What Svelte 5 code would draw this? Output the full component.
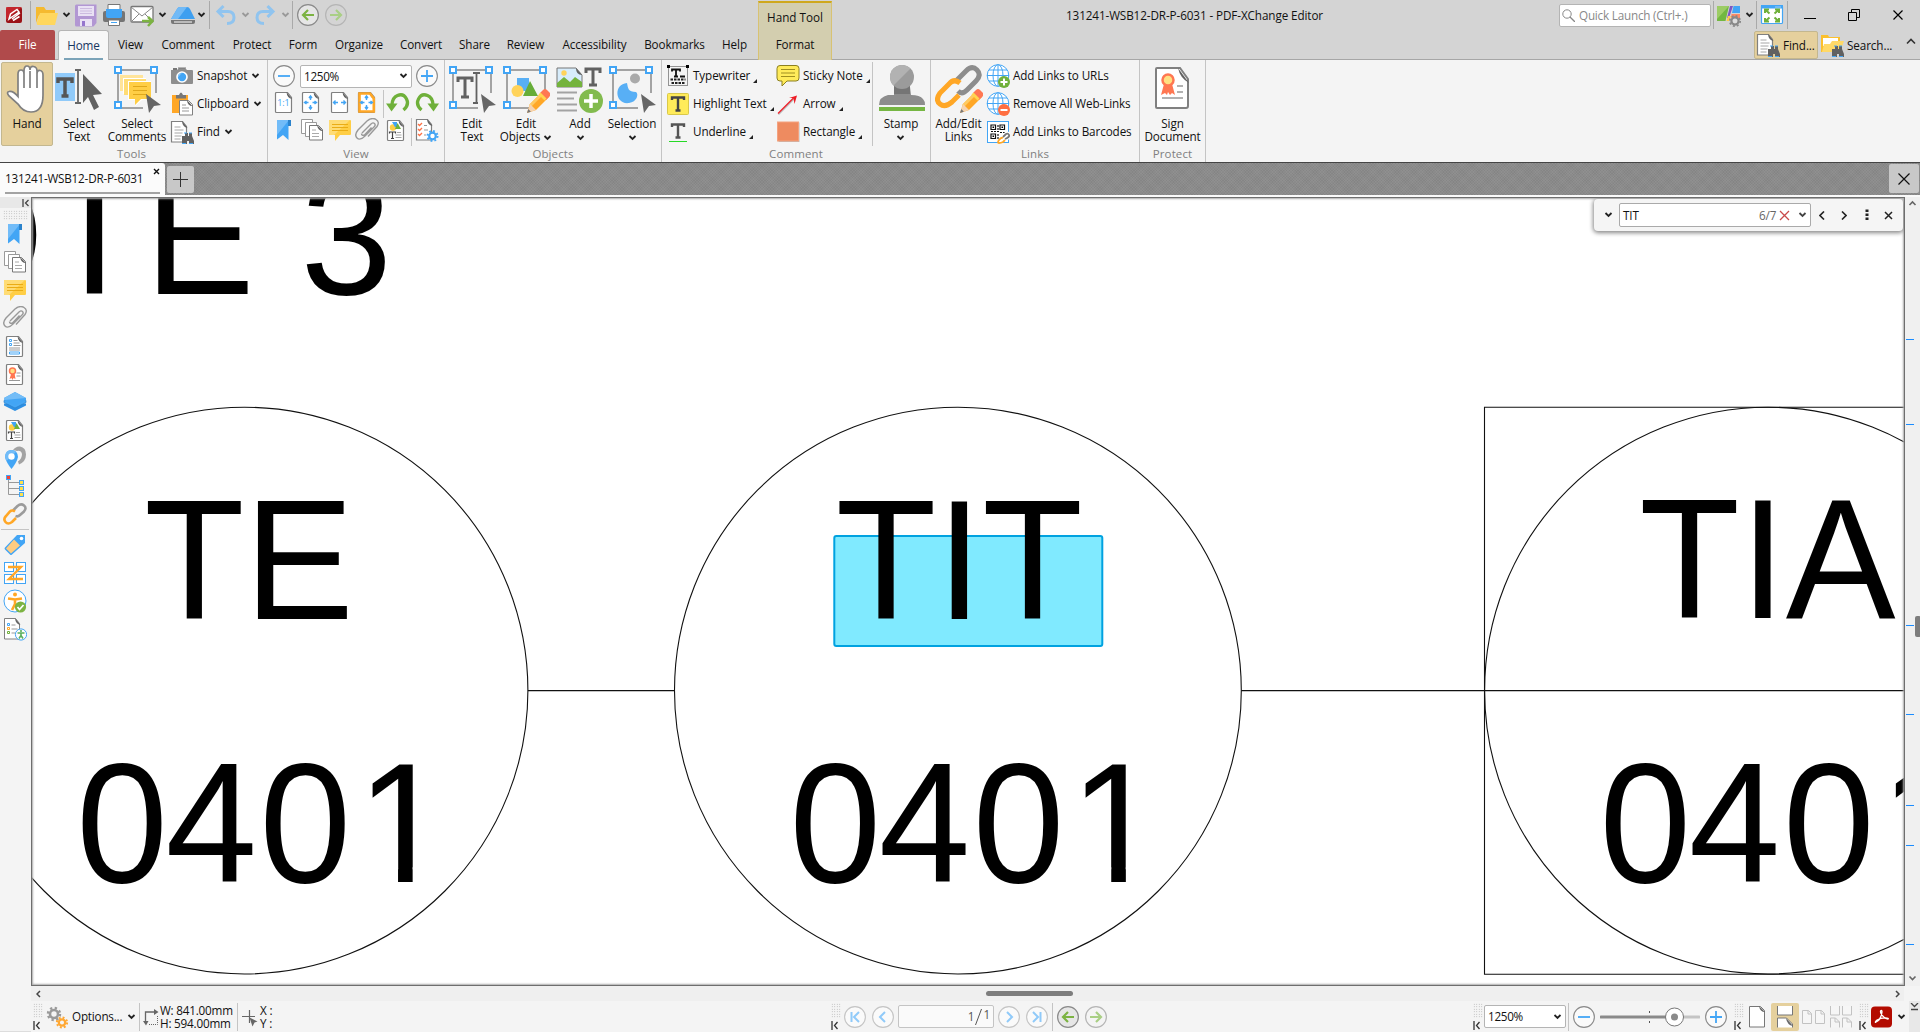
<script>
  const menu = ['View', 'Comment', 'Protect', 'Form', 'Organize', 'Convert', 'Share', 'Review', 'Accessibility', 'Bookmarks', 'Help'];
  const quick = ['logo', '|', 'folder', 'v', 'save', 'print', 'mail', 'v', 'scan', 'v', '|', 'undo', 'vd', 'redo', 'vd', '|', 'back', 'fwd'];
  const side = ['bookmark', 'pages', 'comment', 'clip', 'fields', 'sign', 'layers', 'content', 'dest', 'tree', 'link', '|', 'tag', 'order', 'access', 'report'];
  const hits = [339, 424, 625, 714, 805, 845, 944];
</script>

{#snippet chev(color = '#222')}
  <svg class="chev" width="9" height="6" viewBox="0 0 9 6"><path d="M1.500 1l3 3 3-3" fill="none" stroke={color} stroke-width="1.800" /></svg>
{/snippet}

{#snippet cursor()}
  <path d="M33 29l15 11-7 1-5 7z" fill="#666" />
{/snippet}

{#snippet frame()}
  <path d="M5 5h38v23M5 5v38h25" fill="none" stroke="#a3a3a3" stroke-width="2" />
  <g fill="#fff" stroke="#42a5f5" stroke-width="2"><rect x="2" y="2" width="6" height="6" /><rect x="38" y="2" width="6" height="6" /><rect x="2" y="37" width="6" height="6" /></g>
{/snippet}

{#snippet pencil()}
  <path d="M25 48l3-9 13-13 6 6-13 13z" fill="#ffa726" /><path d="M27 40l13-13 2 2-13 13z" fill="#ffca60" />
  <path d="M25 48l3-9 6 6z" fill="#f5d3b0" /><path d="M25 48l1.300-4 2.600 2.700z" fill="#777" />
  <path d="M38 28l3-3q2-2 4 0l3 3q1 2-1 4l-3 3z" fill="#ff7752" /><path d="M36.500 29.500l2-2 6 6-2 2z" fill="#ffd54f" />
{/snippet}

{#snippet binoc()}
  <path d="M12 16h3v-3h3v3h1v-3h3v3l2 5v3h-5v-3h-2v3h-5v-3z" fill="#616161" /><path d="M14 13h3M19 13h3M12 23.500h4M19 23.500h4" stroke="#42a5f5" />
{/snippet}

{#snippet page()}
  <path d="M4.500 2.500h11l4 5v14q0 1-1 1H4.500q-1 0-1-1v-18q0-1 1-1z" fill="#fff" stroke="#808080" stroke-width="1.200" /><path d="M14.500 2l5.500 7q-5-1-5.500-7z" fill="#616161" />
{/snippet}

{#snippet ring(color = '#8a8a8a')}
  <circle cx="12" cy="12" r="10.400" fill="#fafafa" stroke={color} stroke-width="1.100" />
{/snippet}

{#snippet gear()}
  <circle cx="9" cy="9" r="4" fill="none" stroke="#9a9a9a" stroke-width="2.600" /><circle cx="9" cy="9" r="6" fill="none" stroke="#9a9a9a" stroke-width="2.500" stroke-dasharray="2.3 2.410" />
{/snippet}

{#snippet globe()}
  <g fill="#fff" stroke="#42a5f5"><circle cx="12" cy="11.500" r="10.800" /><ellipse cx="12" cy="11.500" rx="5" ry="10.800" /><path d="M12 1v21M1 11.500h22M3 6h18M3 17h18" fill="none" /></g>
{/snippet}

{#snippet icon(n)}
  <svg width="24" height="24" viewBox="0 0 24 24">
    {#if n === 'logo'}
      <rect x="4" y="4" width="16" height="16" rx="2" fill="#9b1217" /><path d="M4 4h16L4 17z" fill="#d8323a" opacity=".65" />
      <path d="M7 16l1.500-5L15 6.500l2 2.500-6.500 4.500zM10 16l8-6M11 17.500l6.500-4" fill="none" stroke="#fff" stroke-width="1.500" />
    {:else if n === 'folder'}
      <path d="M1 4h8l2 3h9v5H4L1 20z" fill="#f5ba30" /><path d="M5 10h18l-3 12H3q-2 0-1-3z" fill="#ffd75e" />
    {:else if n === 'save'}
      <path d="M1 3q0-1.500 1.500-1.500h20V20l-3 3.500h-17Q1 23.500 1 22z" fill="#b297d3" /><path d="M4 3h16v10H4zM6 16h12v7H6z" fill="#e9e1f4" /><path d="M6 5.500h12M6 8h12M6 10.500h12" stroke="#ccbbe0" /><rect x="8" y="18" width="3" height="5" fill="#9575cd" />
    {:else if n === 'print'}
      <path d="M6 1.500h12V8H6z" fill="#fff" stroke="#777" /><rect x="1" y="8" width="22" height="11" rx="2" fill="#757575" /><path d="M4 6h16v7q0 2-2 2H6q-2 0-2-2z" fill="#42a5f5" /><path d="M6.500 17h11v5.500h-11z" fill="#fff" stroke="#777" /><path d="M9 19.500h6" stroke="#42a5f5" />
    {:else if n === 'mail'}
      <rect x="1" y="3.500" width="22" height="15.500" rx="1" fill="#fff" stroke="#777" stroke-width="1.300" /><path d="M1 4l11 9 11-9M1 19l8-8M23 19l-8-8" fill="none" stroke="#888" /><path d="M12 18h10M18 14l4.500 4-4.500 5" fill="none" stroke="#7cb342" stroke-width="2.500" />
    {:else if n === 'scan'}
      <path d="M6 6q.8-2 3-2h7q2 0 3 2l5 10H0z" fill="#3e9ff0" /><path d="M6 6q.8-2 3-2h7L7 16H0z" fill="#72baf6" /><path d="M0 17h24v2q0 2-2 2H2q-2 0-2-2z" fill="#777" /><path d="M3 19h18" stroke="#fff" />
    {:else if n === 'undo' || n === 'redo'}
      <g transform={n === 'redo' ? 'matrix(-1 0 0 1 24 0)' : undefined}><path d="M9.500 3L4 8.500 9.500 14M4 8.500h10q6 0 6 6t-7 6" fill="none" stroke="#90c4ef" stroke-width="3" /></g>
    {:else if n === 'back'}
      <circle cx="12" cy="12" r="10.400" fill="#e6e6e6" stroke="#8a8a8a" stroke-width="1.200" /><path d="M18 12H7M12 7l-5 5 5 5" fill="none" stroke="#7cb342" stroke-width="2.200" />
    {:else if n === 'fwd'}
      <circle cx="12" cy="12" r="10.400" fill="none" stroke="#b5b5b5" stroke-width="1.200" /><path d="M6 12h11M12 7l5 5-5 5" fill="none" stroke="#a9cf84" stroke-width="2.200" />
    {:else if n === 'minus'}
      {@render ring()}<path d="M6 12h12" stroke="#42a5f5" stroke-width="1.800" />
    {:else if n === 'plus'}
      {@render ring()}<path d="M6 12h12M12 6v12" stroke="#42a5f5" stroke-width="1.800" />
    {:else if n === 'first'}
      {@render ring('#c4c4c4')}<path d="M8.500 7v10M16 7l-5 5 5 5" fill="none" stroke="#90caf9" stroke-width="2" />
    {:else if n === 'prev'}
      {@render ring('#c4c4c4')}<path d="M14 7l-5 5 5 5" fill="none" stroke="#90caf9" stroke-width="2" />
    {:else if n === 'next'}
      {@render ring('#c4c4c4')}<path d="M10 7l5 5-5 5" fill="none" stroke="#90caf9" stroke-width="2" />
    {:else if n === 'last'}
      {@render ring('#c4c4c4')}<path d="M15.500 7v10M8 7l5 5-5 5" fill="none" stroke="#90caf9" stroke-width="2" />
    {:else if n === 'camera'}
      <path d="M1 6h6l2-2h6l2 2h5q1 0 1 1v12q0 1-1 1H2q-1 0-1-1z" fill="#8e8e8e" /><path d="M3 4h4v2H3zM8 3.500h8v1H8z" fill="#777" /><circle cx="12" cy="13" r="5.800" fill="#fff" /><circle cx="12" cy="13" r="4.200" fill="#42a5f5" /><path d="M12 8.800a4.200 4.200 0 0 0-4 4.500z" fill="#90caf9" />
    {:else if n === 'clipboard'}
      <path d="M2 3h4v3h10V3h2v18H2z" fill="#ffa726" /><path d="M6 3h3q2-5 4 0h3v3.500H6z" fill="#777" /><path d="M9.500 8.500h9l4 4v10.500h-13z" fill="#fff" stroke="#808080" /><path d="M17 8l5.500 6q-5 0-5.500-6z" fill="#616161" /><path d="M12 13h4M12 16h7M12 19h7" stroke="#999" />
    {:else if n === 'find'}
      <path d="M1.500 1.500h11l4 5V22h-15z" fill="#fff" stroke="#808080" stroke-width="1.200" /><path d="M12 1l5.500 7q-5-1-5.500-7z" fill="#616161" /><path d="M4.500 7h6M4.500 10h9M4.500 13h8M4.500 16h7M4.500 19h6" stroke="#a6a6a6" />{@render binoc()}
    {:else if n === 'searchf'}
      <path d="M1 2h7l1 2h11v15H1z" fill="#fbc02d" /><path d="M3 5h15v8H3z" fill="#fff" /><path d="M4 11h6l2-3h12l-4 11H2z" fill="#ffd968" />{@render binoc()}
    {:else if n === 'one'}
      {@render page()}<text x="11.500" y="15.500" font-size="9" text-anchor="middle" fill="#42a5f5">1:1</text>
    {:else if n === 'fit' || n === 'fitv'}
      {@render page()}{#if n === 'fitv'}<path d="M4.500 3.500h10.500l3.800 5v13H4.500z" fill="none" stroke="#ffa726" stroke-width="2.600" />{/if}
      <path d="M11.500 10V6M10 8l1.500-2L13 8M11.500 15v4M10 17l1.500 2 1.500-2M9.500 12.500h-4M7.500 11l-2 1.500 2 1.500M13.500 12.500h4M15.500 11l2 1.500-2 1.500" fill="none" stroke="#42a5f5" stroke-width="1.400" />
    {:else if n === 'fitw'}
      {@render page()}<path d="M10 12.500H5.500M7.500 10.500l-2 2 2 2M13 12.500h4.500M15.500 10.500l2 2-2 2" fill="none" stroke="#42a5f5" stroke-width="1.400" />
    {:else if n === 'rotl' || n === 'rotr'}
      <g transform={n === 'rotr' ? 'matrix(-1 0 0 1 24 0)' : undefined}><path d="M17.500 20q6-5 3-11t-9-3.500q-5 2-5.500 9" fill="none" stroke="#6fb03a" stroke-width="3.300" /><path d="M0 13.500h11.500l-6 8z" fill="#6fb03a" /></g>
    {:else if n === 'bookmark'}
      <path d="M5 2h11.500v20l-5.500-5-6 4.500z" fill="#42a5f5" /><path d="M5 2h12L5 17z" fill="#72bcf8" /><path d="M16 2h3v6h-3z" fill="#2b83cc" />
    {:else if n === 'pages'}
      <g fill="#fff" stroke="#999"><path d="M1.500 1.500h11v14h-11z" /><path d="M5.500 4.500h11v14h-11z" /><path d="M9.500 7.500h9l4 4v10.500h-13z" stroke="#777" /></g><path d="M17 7l6 6q-5 0-6-6z" fill="#616161" /><path d="M12 12h4M12 15.500h7M12 18.500h7" stroke="#aaa" />
    {:else if n === 'comment'}
      <path d="M2 2h20q1 0 1 1v13q0 1-1 1H12l-5 6v-6H2q-1 0-1-1V3q0-1 1-1z" fill="#ffce45" /><path d="M1 3q0-1 1-1h20L6 17H2q-1 0-1-1z" fill="#ffdc75" /><path d="M4 6.500h16M4 9.500h16M4 12.500h16" stroke="#eaac15" stroke-width="1.200" />
    {:else if n === 'clip'}
      <path d="M7 15l9-9q2-2 3.500-.5T19 9l-9 9q-5 5-8 2t1-8l9-9q5-4 9-1.500t1 7l-9 10M6.500 15.500q0 2.500 3 1.500l7-7.500" fill="none" stroke="#999" stroke-width="1.400" />
    {:else if n === 'content'}
      {@render page()}<circle cx="9" cy="9.500" r="3.200" fill="#ffce45" /><path d="M8 4h5v5h-2z" fill="#42a5f5" /><path d="M13.500 5l3.500 6h-6z" fill="#6fb03a" /><path d="M5.500 14h6M8.500 14v6.500M7 20.500h3M5.500 13.500v2M11.500 13.500v2" stroke="#444" stroke-width="1.200" fill="none" /><path d="M13 14.500h4M11.500 17h6M11.500 19.500h6" stroke="#a6a6a6" />
    {:else if n === 'prefs'}
      <path d="M1.500 1.500h11l4 5V22h-15z" fill="#fff" stroke="#808080" stroke-width="1.200" /><path d="M12 1l5.500 7q-5-1-5.500-7z" fill="#616161" /><path d="M3 6l1.500 1.500L7 5M3 11l1.500 1.500L7 10M3 16l1.500 1.500L7 15" fill="none" stroke="#ff7043" stroke-width="1.300" /><path d="M9 7.500h3M9 12h4M9 17h2" stroke="#999" />
      <circle cx="17.500" cy="18" r="3.300" fill="#fff" stroke="#42a5f5" stroke-width="2.200" /><circle cx="17.500" cy="18" r="5" fill="none" stroke="#42a5f5" stroke-width="2" stroke-dasharray="1.8 2.127" />
    {:else if n === 'typewriter'}
      <path d="M2.500 2.500h19v19h-19z" fill="none" stroke="#333" stroke-dasharray="1 1" /><path d="M6 7.500V5.500h8v2M10 5.500v7M8 12.500h4M14 12.500h5" fill="none" stroke="#111" stroke-width="1.800" /><path d="M4.500 15.500h15M5.500 19h13" stroke="#222" stroke-width="2.200" stroke-dasharray="2.500 1" /><path d="M1 1h3v3H1zM20 1h3v3h-3z" />
    {:else if n === 'highlight'}
      <rect x="1.500" y="1.500" width="21" height="21" rx="1" fill="#ffeb5a" stroke="#d9c84a" /><path d="M6 8V5.500h12V8M12 5.500v13M9.500 18.500h5" fill="none" stroke="#444" stroke-width="2.400" />
    {:else if n === 'underline'}
      <path d="M6 7V4.500h12V7M12 4.500v13M9.500 17.500h5" fill="none" stroke="#555" stroke-width="2.400" /><path d="M3 21.500h18" stroke="#26d926" />
    {:else if n === 'sticky'}
      <path d="M4 1.500h16q3 0 3 3V14q0 3-3 3h-9l-5 5v-5H4q-3 0-3-3V4.500q0-3 3-3z" fill="#ffeb5a" stroke="#8c8020" /><path d="M5 5.500h14M5 9h14M5 12.500h14" stroke="#a08f20" />
    {:else if n === 'arrow'}
      <path d="M2.500 22.500L19 6" fill="none" stroke="#bbb" stroke-width="1.500" /><path d="M2 21.500L18 5.500" stroke="#ee1c25" stroke-width="1.300" /><path d="M13 6l8-2.500L18.500 12l-1-6z" fill="#ee1c25" />
    {:else if n === 'rect'}
      <rect x="2.500" y="2.500" width="21" height="19.500" fill="#bbb" /><rect x="1.500" y="2" width="21" height="19" fill="#ee8b60" stroke="#f4a27f" />
    {:else if n === 'urladd'}
      {@render globe()}<circle cx="18" cy="18" r="6" fill="#6fb03a" /><path d="M14.500 18h7M18 14.500v7" stroke="#fff" stroke-width="2" />
    {:else if n === 'urldel'}
      {@render globe()}<circle cx="18" cy="18" r="6" fill="#ff6e40" /><path d="M14.500 18h7" stroke="#fff" stroke-width="2" />
    {:else if n === 'barcode'}
      <rect x="1.500" y="1.500" width="21" height="21" fill="#fff" stroke="#42a5f5" /><g fill="none" stroke="#111" stroke-width="1.200"><path d="M5 5h4.500v4.500H5zM14 5h4.500v4.500H14zM5 14h4.500v4.500H5z" /><path d="M5 11.500h8M12 5v7M14 12.500h5M12 14v5" stroke-dasharray="2 1" /></g><path d="M6.500 6.500H8V8H6.500zM15.500 6.500H17V8h-1.500zM6.500 15.500H8V17H6.500z" /><path d="M18 16l2-2q2-1 3 1t-2 3l-2 1" stroke="#fff" stroke-width="4" fill="none" /><path d="M17 17l3-3q2-1 3 1t-4 4" stroke="#777" stroke-width="1.800" fill="none" /><path d="M17 18q-2-1-4 2t0 3 4-1l2-2" stroke="#ffa726" stroke-width="1.800" fill="none" />
    {:else if n === 'fields'}
      {@render page()}<path d="M6.500 5.500h2v2h-2zM6.500 9.500h2v2h-2zM6.500 18h10v2h-10z" fill="none" stroke="#42a5f5" /><path d="M10.500 6.500h4M10.500 9h6M10.500 11.500h7M6 14h11M6 16h11" stroke="#999" />
    {:else if n === 'sign'}
      {@render page()}<path d="M8.500 11l-2 6 2-1 1 2 1-2 2 1-1-6z" fill="#ff7752" /><circle cx="9.500" cy="9" r="3" fill="#ffe082" stroke="#ff7752" stroke-width="1.500" /><path d="M13.500 11h4M13.500 14h4M6 18.500h11" stroke="#999" />
    {:else if n === 'layers'}
      <path d="M1 13.500v2L12 21l11-5.500v-2z" fill="#2d8fe3" /><path d="M1 10.500v2L12 18l11-5.500v-2z" fill="#46a7f5" stroke="#2b83cc" stroke-width=".7" /><path d="M12 2l11 6v2l-11 5.500L1 10V8z" fill="#42a5f5" /><path d="M12 2l11 6L1 10V8z" fill="#74bdf7" />
    {:else if n === 'dest'}
      <path d="M10 4q3-4 7-3.500 6 1 6 8 0 7-7 10l-1-3q4-3 4-7.500-1-4-5-3z" fill="#a3a3a3" /><path d="M8.500 4q6 0 6.500 7-1 5-6.500 12Q3 16 2 11q.5-7 6.500-7z" fill="#42a5f5" /><path d="M8.500 4Q2.500 4 2 11q.5 2 1.500 4L13 6q-2-2-4.500-2z" fill="#72bcf8" /><circle cx="8.500" cy="10.500" r="3.200" fill="#fff" />
    {:else if n === 'tree'}
      <path d="M5.500 4v16.500H18M5.500 8.500H18M5.500 14.500H18" fill="none" stroke="#999" /><g stroke="#42a5f5"><rect x="3.500" y="1.500" width="4" height="4" fill="#f44336" /><g fill="#ffe04a"><rect x="16.500" y="6.500" width="4" height="4" /><rect x="16.500" y="12.500" width="4" height="4" /><rect x="16.500" y="18.500" width="4" height="4" /></g></g>
    {:else if n === 'link'}
      <path d="M10 8.500l4.500-4.500q3.500-3 6.500-.5t0 6l-4 3.500q-2 2-4.500 1" fill="none" stroke="#9b9b9b" stroke-width="2.600" /><path d="M12 9.500q-3-2-5 0L3 14q-3 3-.5 6t6.500 0l4-4" fill="none" stroke="#ffa726" stroke-width="2.600" />
    {:else if n === 'tag'}
      <path d="M14 2h8v8L9 21.500q-1 1-2 0l-5-5q-1-1 0-2z" fill="#42a5f5" /><path d="M11 6.500l6 6-9 8-5-5z" fill="#ffcc80" /><circle cx="18.500" cy="5.500" r="1.800" fill="#fff" />
    {:else if n === 'order'}
      <g fill="#fff" stroke="#42a5f5"><rect x="1.500" y="1.500" width="9" height="9" /><rect x="13.500" y="1.500" width="9" height="9" /><rect x="1.500" y="13.500" width="9" height="9" /><rect x="13.500" y="13.500" width="9" height="9" /></g><path d="M5 6h13L6 18h14" fill="none" stroke="#ffa726" stroke-width="2.400" />
    {:else if n === 'access'}
      <circle cx="12" cy="12" r="11" fill="#fff" stroke="#42a5f5" /><circle cx="12" cy="5.500" r="2" fill="#ffa726" /><path d="M5 9.500l7 1 7-1M12 10v5l-3 6M12 15l3 5" fill="none" stroke="#ffa726" stroke-width="2.600" /><circle cx="17.500" cy="18" r="5.600" fill="#7cb342" /><path d="M14.500 18l2 2.500 4-4.500" fill="none" stroke="#fff" stroke-width="1.700" />
    {:else if n === 'report'}
      <path d="M1.500 1.500h11l4 5V22h-15z" fill="#fff" stroke="#808080" /><path d="M12 1l5.500 7q-5-1-5.500-7z" fill="#616161" /><g fill="none"><path d="M4.500 6.500h2v2h-2z" stroke="#42a5f5" /><path d="M4.500 10.500h2v2h-2z" stroke="#ffa726" /><path d="M4.500 14.500h2v2h-2z" stroke="#6fb03a" /><path d="M8.500 8h4M8.500 12h6M8.500 16h4" stroke="#999" /></g><circle cx="18" cy="17.500" r="5.600" fill="#fff" stroke="#42a5f5" /><path d="M14.500 16h7M18 16v2.500l-2 3M18 18.500l2 3" fill="none" stroke="#5ab05e" stroke-width="1.600" /><circle cx="18" cy="14" r="1.100" fill="#5ab05e" />
    {:else if n === 'uiset'}
      <path d="M0 3h12L8.500 18H0z" fill="#72b840" /><path d="M0 3h12L0 16z" fill="#9ccc65" /><path d="M13 3h3l-4 12h-2z" fill="#7e57c2" /><path d="M16.500 3H23v7h-8z" fill="#42a5f5" /><path d="M14.500 11H23v4h-9z" fill="#ff8a65" /><path d="M11 13h3l-2 5H9.500z" fill="#ffc94a" /><circle cx="18" cy="18" r="3.600" fill="#ddd" stroke="#888" stroke-width="2.200" /><circle cx="18" cy="18" r="5.200" fill="none" stroke="#888" stroke-width="1.700" stroke-dasharray="2 2.080" />
    {:else if n === 'full'}
      <rect x="1.500" y="2.500" width="21" height="18" rx="1" fill="#fff" stroke="#42a5f5" stroke-width="1.200" /><path d="M1 2h22v3.500H1z" fill="#42a5f5" /><path d="M15.500 4h6" stroke="#fff" stroke-dasharray="1 1" /><path d="M5 10V6.500h4M19 10V6.500h-4M5 15v3.500h4M19 15v3.500h-4M5 6.500l4.500 4M19 6.500l-4.500 4M5 18.500l4.500-4M19 18.500l-4.500-4" fill="none" stroke="#6fb03a" stroke-width="2" />
    {:else if n === 'gears'}
      {@render gear()}<circle cx="17" cy="17.500" r="3.200" fill="#f4f4f4" stroke="#ffa834" stroke-width="2.300" /><circle cx="17" cy="17.500" r="5" fill="none" stroke="#ffa834" stroke-width="2.200" stroke-dasharray="1.900 2.027" />
    {:else if n === 'wh'}
      <path d="M2.500 18V7H11" fill="none" stroke="#666" stroke-width="1.300" /><path d="M11 4l4.500 3-4.500 3zM0 16h5.500L3 20.500z" fill="#666" /><path d="M6 19.500h8.500v-9" fill="none" stroke="#666" stroke-dasharray="1 1" />
    {:else if n === 'cross'}
      <path d="M0 11.500h13M7.500 5v13" stroke="#666" stroke-width="1.200" /><path d="M7.500 12.500l8 4-3 1-2 4z" fill="#666" />
    {:else if n === 'p1'}
      <path d="M4.500 1.500h11l4 4v16.500h-15z" fill="#fff" stroke="#777" /><path d="M14 1l6 6q-5 0-6-6z" fill="#666" />
    {:else if n === 'p2'}
      <path d="M4.500 1v9h15V1M4.500 22.500V13h9l6 6v3.500" fill="#fff" stroke="#777" /><path d="M13 13l7 8q-6-1-7-8z" fill="#666" />
    {:else if n === 'p3'}
      <path d="M1.500 5.500h6l3 3v10h-9zM14.500 5.500h6l3 3v10h-9zM7 5.500V9h3.500M20 5.500V9h3.500" fill="#f6f6f6" stroke="#c2c2c2" />
    {:else if n === 'p4'}
      <path d="M1.500 1v9h9V1M13.500 1v9h9V1M1.500 22.500V13h5l4 4v5.500M13.500 22.500V13h5l4 4v5.500M6 13v4h4.500M18 13v4h4.500" fill="#f6f6f6" stroke="#c2c2c2" />
    {:else if n === 'acro'}
      <rect x="1" y="1.500" width="21" height="21" rx="4" fill="#b30b00" /><path d="M6 17q5-2 6-10 0-2-1-1.500c-2 2 3 8 7 8.500 2-1-5-2.500-11 1-2 1.500-2 3-1 2z" fill="none" stroke="#fff" stroke-width="1.300" />
    {/if}
  </svg>
{/snippet}

{#snippet big(n)}
  <svg width="48" height="48" viewBox="0 0 48 48">
    {#if n === 'hand'}
      <path d="M15 30V9q0-4 3-4t3 4V6q0-5 3-5t3 4V5q0-4 3.500-3.500T34 6v3q0-4 3-3.500T40 10v20q0 17-12 17-8 0-13-8L6 31q-3-4 0-4.500 4-1 9 5z" fill="#fff" stroke="#808080" stroke-width="1.700" /><path d="M21 9v14M27 6v17M34 9v14" stroke="#808080" stroke-width="1.700" />
    {:else if n === 'seltext'}
      <rect y="8" width="20" height="28" fill="#90caf9" /><path d="M3 18v-4h14v4M10 14v17M6.500 31h7" fill="none" stroke="#555" stroke-width="3.500" /><path d="M20 5h6M20 38h6M23 5v33" stroke="#666" stroke-width="1.800" /><path d="M28 9l19 20-9 1 6 12-5 3-6-13-5 6z" fill="#616161" />
    {:else if n === 'selcom'}
      {@render frame()}<path d="M7 10h23v16H7z" fill="#ffe49a" /><path d="M10 13h23v16H10z" fill="#fff" /><path d="M11 14h22v16H11z" fill="#ffdc75" /><path d="M15 16h23v19h-9l-7 6v-6h-7z" fill="#fff" /><path d="M16 17h22v17H28l-6 6v-6h-6z" fill="#ffce45" /><path d="M20 21.500h14M20 25.500h14M20 29.500h14" stroke="#e0a81b" />{@render cursor()}
    {:else if n === 'edittext'}
      {@render frame()}<path d="M10 17v-4h14v4M17 13v19M13 32h8" fill="none" stroke="#616161" stroke-width="3" /><path d="M25 8h7M25 38h5M28.500 8v30" stroke="#616161" stroke-width="1.800" />{@render cursor()}
    {:else if n === 'editobj'}
      {@render frame()}<path d="M15 13h12v13H15z" fill="#58aff5" /><path d="M28 16l8 15H21z" fill="#66ad38" /><circle cx="15.500" cy="26" r="6" fill="#ffd35a" />{@render pencil()}
    {:else if n === 'add'}
      <path d="M1 3h19l6 7v12H1z" fill="#d7ecfb" stroke="#777" /><circle cx="8" cy="8" r="2.700" fill="#ffd35a" /><path d="M1 18l7-6 6 5 5-5 7 5v5H1z" fill="#74b33c" /><path d="M20 3l6 7q-6 0-6-7z" fill="#616161" /><path d="M30 8V4h14v4M37 4v16M33 20h8" fill="none" stroke="#616161" stroke-width="3" /><path d="M1 27.500h20M1 33.500h17M1 39.500h20M1 45.500h20" stroke="#a3a3a3" stroke-width="1.800" /><circle cx="35" cy="36" r="12" fill="#82bb4e" /><path d="M28 36h14M35 29v14" stroke="#fff" stroke-width="3.500" />
    {:else if n === 'selection'}
      {@render frame()}<circle cx="27" cy="13.500" r="5" fill="#aaa" /><path d="M19 18c-14 1-12 22 2 20 8-1 10-9 7-11-8 0-8-4-9-9z" fill="#58aff5" />{@render cursor()}
    {:else if n === 'stamp'}
      <path d="M17 22h16l1 8q9 0 12 4 2 2 2 6H2q0-8 9-10h6z" fill="#8d8d8d" /><path d="M17 20h16v9H17z" fill="#757575" /><circle cx="25" cy="12" r="12" fill="#9b9b9b" /><path d="M16.500 20.500A12 12 0 0 1 33.500 3.500z" fill="#b2b2b2" /><path d="M2 44h46" stroke="#76b643" stroke-width="4" />
    {:else if n === 'links'}
      <path d="M21 16l10-10q6-6 11-1t-1 11L32 25q-5 5-9 1" fill="none" stroke="#8d8d8d" stroke-width="5" /><path d="M25 18q-6-5-11 1L5 28q-5 7 0 11t12-2l7-7" fill="none" stroke="#ffa726" stroke-width="5" />{@render pencil()}
    {:else if n === 'signdoc'}
      <path d="M8 3h23l8 11v27q0 2-2 2H8q-1 0-1-1V4q0-1 1-1z" fill="#fff" stroke="#808080" stroke-width="2" /><path d="M29 3l11 15Q31 13 29 3z" fill="#616161" /><path d="M15 19l-3 11 4-2 2 2 1-3 2 3 2-2 3 2-3-11z" fill="#ff7752" /><circle cx="19" cy="15" r="5.500" fill="#ffe082" stroke="#ff7752" stroke-width="2.500" /><path d="M28 21h6M28 27h6M13 33h21" stroke="#999" stroke-width="1.500" />
    {/if}
  </svg>
{/snippet}

{#snippet grip()}
  <div class="grip"><i></i><svg width="8" height="9" viewBox="0 0 8 9"><path d="M1 0v9M6.500 1L3.500 4.500l3 3.500" fill="none" stroke="#333" stroke-width="1.300" /></svg></div>
{/snippet}

{#snippet corner()}<svg class="corner" width="4" height="4" viewBox="0 0 4 4"><path d="M4 0v4H0z" fill="#222" /></svg>{/snippet}

<div class="app">
  <header>
    <div class="quick">
      {#each quick as q}
        {#if q === '|'}<i class="vr"></i>{:else if q === 'v'}{@render chev()}{:else if q === 'vd'}{@render chev('#999')}{:else}{@render icon(q)}{/if}
      {/each}
    </div>
    <div class="context">Hand Tool</div>
    <div class="title">131241-WSB12-DR-P-6031 - PDF-XChange Editor</div>
    <div class="launch"><svg width="13" height="13" viewBox="0 0 13 13"><circle cx="5" cy="5" r="4.200" fill="none" stroke="#888" /><path d="M8 8l5 5" stroke="#888" stroke-width="1.300" /></svg>Quick Launch (Ctrl+.)</div>
    <div class="winbar">
      <i class="vr"></i>{@render icon('uiset')}{@render chev()}<i class="vr"></i>{@render icon('full')}<i class="vr"></i>
      <svg width="12" height="12" viewBox="0 0 12 12"><path d="M0 9.500h12" stroke="#000" /></svg>
      <svg width="12" height="12" viewBox="0 0 12 12"><path d="M.5 3.500h8v8h-8zM3.500 3V.5h8v8H9" fill="none" stroke="#000" /></svg>
      <svg width="12" height="12" viewBox="0 0 12 12"><path d="M1.500 1.500l9 9M10.500 1.500l-9 9" stroke="#000" stroke-width="1.200" /></svg>
    </div>
  </header>

  <nav>
    <div class="tabs">
      <span class="file">File</span><span></span><span class="home">Home</span>
      {#each menu as m}<span>{m}</span>{/each}
      <span></span><span class="format">Format</span>
    </div>
    <div class="findbtn">{@render icon('find')}Find...</div>
    <div class="searchbtn">{@render icon('searchf')}Search...</div>
    <svg class="collapse" width="10" height="7" viewBox="0 0 10 7"><path d="M1 5.500l4-4 4 4" fill="none" stroke="#333" stroke-width="1.600" /></svg>
  </nav>

  <section class="ribbon">
    <div class="group tools">
      <div class="body">
        <div class="bigbtn on">{@render big('hand')}<span>Hand</span></div>
        <div class="bigbtn">{@render big('seltext')}<span>Select<br />Text</span></div>
        <div class="bigbtn">{@render big('selcom')}<span>Select<br />Comments</span></div>
        <div class="rows">
          <div>{@render icon('camera')}<span>Snapshot</span>{@render chev()}</div>
          <div>{@render icon('clipboard')}<span>Clipboard</span>{@render chev()}</div>
          <div>{@render icon('find')}<span>Find</span>{@render chev()}</div>
        </div>
      </div>
      <h6>Tools</h6>
    </div>
    <div class="group view">
      <div class="body">
        <div class="zoomrow">{@render icon('minus')}<div class="combo">1250%{@render chev()}</div>{@render icon('plus')}</div>
        <div class="r2">{@render icon('one')}{@render icon('fit')}{@render icon('fitw')}{@render icon('fitv')}<i class="vr"></i>{@render icon('rotl')}{@render icon('rotr')}</div>
        <div class="r3">{@render icon('bookmark')}{@render icon('pages')}{@render icon('comment')}{@render icon('clip')}{@render icon('content')}<i class="vr"></i>{@render icon('prefs')}</div>
      </div>
      <h6>View</h6>
    </div>
    <div class="group objects">
      <div class="body">
        <div class="bigbtn">{@render big('edittext')}<span>Edit<br />Text</span></div>
        <div class="bigbtn">{@render big('editobj')}<span>Edit<br />Objects {@render chev()}</span></div>
        <div class="bigbtn">{@render big('add')}<span>Add<br />{@render chev()}</span></div>
        <div class="bigbtn">{@render big('selection')}<span>Selection<br />{@render chev()}</span></div>
      </div>
      <h6>Objects</h6>
    </div>
    <div class="group comments">
      <div class="body">
        <div class="rows">
          <div>{@render icon('typewriter')}<span>Typewriter</span>{@render corner()}</div>
          <div>{@render icon('highlight')}<span>Highlight Text</span>{@render corner()}</div>
          <div>{@render icon('underline')}<span>Underline</span>{@render corner()}</div>
        </div>
        <div class="rows">
          <div>{@render icon('sticky')}<span>Sticky Note</span>{@render corner()}</div>
          <div>{@render icon('arrow')}<span>Arrow</span>{@render corner()}</div>
          <div>{@render icon('rect')}<span>Rectangle</span>{@render corner()}</div>
        </div>
        <i class="vr"></i>
        <div class="bigbtn">{@render big('stamp')}<span>Stamp<br />{@render chev()}</span></div>
      </div>
      <h6>Comment</h6>
    </div>
    <div class="group links">
      <div class="body">
        <div class="bigbtn">{@render big('links')}<span>Add/Edit<br />Links</span></div>
        <div class="rows">
          <div>{@render icon('urladd')}<span>Add Links to URLs</span></div>
          <div>{@render icon('urldel')}<span>Remove All Web-Links</span></div>
          <div>{@render icon('barcode')}<span>Add Links to Barcodes</span></div>
        </div>
      </div>
      <h6>Links</h6>
    </div>
    <div class="group protect">
      <div class="body"><div class="bigbtn">{@render big('signdoc')}<span>Sign<br />Document</span></div></div>
      <h6>Protect</h6>
    </div>
  </section>

  <div class="doctabs">
    <div class="doctab"><span>131241-WSB12-DR-P-6031</span><svg width="7" height="7" viewBox="0 0 7 7"><path d="M1 1l5 5M6 1L1 6" stroke="#111" stroke-width="1.400" /></svg></div>
    <div class="newtab"><svg width="15" height="15" viewBox="0 0 15 15"><path d="M0 7.500h15M7.500 0v15" stroke="#333" /></svg></div>
    <div class="closeall"><svg width="12" height="12" viewBox="0 0 12 12"><path d="M.5.500l11 11M11.500.500l-11 11" stroke="#111" stroke-width="1.200" /></svg></div>
  </div>

  <div class="main">
    <aside>
      <div class="sidehead"><svg width="8" height="9" viewBox="0 0 8 9"><path d="M1 0v8M6.500 1L3.500 4l3 3" fill="none" stroke="#444" stroke-width="1.300" /></svg></div>
      <i class="sidedots"></i>
      {#each side as s}
        {#if s === '|'}<hr />{:else}<div class="sideicon">{@render icon(s)}</div>{/if}
      {/each}
    </aside>
    <div class="right">
      <div class="viewer">
        <div class="canvas">
          <svg class="drawing" width="1872" height="787" viewBox="32 198 1872 787">
            <defs><clipPath id="stem"><path d="M-10-150H400V-15H350V10H334.800V-15H290V10H-10z" /></clipPath></defs>
            <rect x="834.300" y="536" width="268" height="110" rx="2" fill="#80eaff" stroke="#00a2e0" stroke-width="2" />
            <g fill="none" stroke="#111" stroke-width="1.100">
              <circle cx="244.500" cy="690.600" r="283.400" /><circle cx="957.900" cy="690.600" r="283.400" /><circle cx="1768" cy="690.600" r="283.400" />
              <path d="M527.900 690.600H674.500M1241.300 690.600H1904M1904 407.200H1484.500V974.200H1904" />
            </g>
            <g class="cad">
              <text transform="translate(-84 294) scale(.961 1)">OTE 3</text>
              <text transform="translate(144.300 619) scale(.957 1)">TE</text>
              <text transform="translate(835.800 619) scale(.961 1)">TIT</text>
              <text transform="translate(1639.300 617.500) scale(.961 1)">TIA</text>
              {#each [76.300, 789.500, 1599.600] as x}
                <text transform="translate({x} 882.300) scale(.961 1)" clip-path="url(#stem)">0<tspan dx="-2.500">4</tspan><tspan dx="2.500">0</tspan><tspan dx="5.600">1</tspan></text>
              {/each}
            </g>
          </svg>
          <div class="findpanel">
            {@render chev()}
            <div class="findbox"><b>TIT</b><span>6/7</span><svg width="11" height="11" viewBox="0 0 11 11"><path d="M1 1l9 9M10 1l-9 9" stroke="#c94a4a" stroke-width="1.300" /></svg>{@render chev('#444')}</div>
            <svg width="6" height="9" viewBox="0 0 6 9"><path d="M5 .5l-4 4 4 4" fill="none" stroke="#222" stroke-width="1.600" /></svg>
            <svg width="6" height="9" viewBox="0 0 6 9"><path d="M1 .5l4 4-4 4" fill="none" stroke="#222" stroke-width="1.600" /></svg>
            <svg width="4" height="12" viewBox="0 0 4 12"><path d="M.5.500h3v2.500h-3zM.5 4.500h3V7h-3zM.5 8.500h3V11h-3z" fill="#222" /></svg>
            <svg width="9" height="9" viewBox="0 0 9 9"><path d="M1 1l7 7M8 1L1 8" stroke="#222" stroke-width="1.500" /></svg>
          </div>
        </div>
        <svg class="vscroll" width="15" height="789" viewBox="1905 197 15 789">
          <path d="M1909.500 205l3-3 3 3M1909.500 976.500l3 3 3-3" fill="none" stroke="#666" stroke-width="1.600" />
          {#each hits as y}<rect x="1906" {y} width="8" height="1" fill="#1a8cff" />{/each}
          <rect x="1915" y="616" width="6" height="21" rx="2" fill="#7d7d7d" />
        </svg>
      </div>
      <div class="hscroll">
        <svg width="5" height="8" viewBox="0 0 5 8"><path d="M4 1L1 4l3 3" fill="none" stroke="#444" stroke-width="1.500" /></svg>
        <i></i>
        <svg width="5" height="8" viewBox="0 0 5 8"><path d="M1 1l3 3-3 3" fill="none" stroke="#444" stroke-width="1.500" /></svg>
      </div>
      <footer>
        <div class="st left">
          {@render grip()}{@render icon('gears')}<span>Options...</span>{@render chev()}<i class="vr"></i>{@render icon('wh')}
          <span class="two">W: 841.00mm<br />H: 594.00mm</span><i class="vr"></i>{@render icon('cross')}<span class="two">X :<br />Y :</span>
        </div>
        <div class="st center">
          {@render grip()}{@render icon('first')}{@render icon('prev')}
          <div class="pagebox">1<svg width="7" height="16" viewBox="0 0 7 16"><path d="M6.500 0L.5 16" stroke="#555" /></svg><sup>1</sup></div>
          {@render icon('next')}{@render icon('last')}<i class="vr"></i>{@render icon('back')}{@render icon('fwd')}
        </div>
        <div class="st end">
          {@render grip()}<div class="combo">1250%{@render chev()}</div><i class="vr"></i>{@render icon('minus')}
          <svg width="100" height="24" viewBox="0 0 100 24"><path d="M1 12h66" stroke="#8a8a8a" stroke-width="3" stroke-linecap="round" /><path d="M84 12h15" stroke="#c4c4c4" stroke-width="3" stroke-linecap="round" /><path d="M49.500 6v2M49.500 16v2" stroke="#555" /><circle cx="74.500" cy="12" r="9" fill="#fff" stroke="#777" /><circle cx="74.500" cy="12" r="3.500" fill="#8a8a8a" /></svg>
          {@render icon('plus')}{@render grip()}{@render icon('p1')}<div class="pon">{@render icon('p2')}</div>{@render icon('p3')}{@render icon('p4')}{@render grip()}{@render icon('acro')}{@render chev()}
          <div class="tail"><svg width="9" height="8" viewBox="0 0 9 8"><path d="M1 0l3.500 3.500L8 0M1 6.500h7" fill="none" stroke="#444" stroke-width="1.300" /></svg></div>
        </div>
      </footer>
    </div>
  </div>
</div>

<style>
  :global(body) { margin: 0; overflow: hidden; }
  .app { width: 1920px; height: 1032px; display: grid; grid-template-rows: 30px 30px 103px 34px 835px; background: #f4f4f4; color: #111; font: 11.7px/13px 'Open Sans', 'Noto Sans', sans-serif; letter-spacing: -.1px; white-space: nowrap; overflow: hidden; }
  svg { display: block; flex: none; }
  .vr { display: block; width: 1px; height: 28px; background: #a9a9a9; }

  header { display: grid; grid-template-columns: 349px 409px 74px 234px 493px 154px 207px; align-items: center; background: #d4d4d4; }
  .quick { grid-column: 1; display: grid; grid-template-columns: 28px 5px 27px 13px 26px 30px 25px 16px 25px 13px 3px 29px 11px 28px 13px 1px 30px 26px; align-items: center; justify-items: center; height: 30px; }
  .context { grid-column: 3; height: 29px; margin-top: 1px; box-sizing: border-box; border: solid #d8c272; border-width: 2px 1px 0; border-top-color: #cfa81c; background: #d3ceaf; text-align: center; line-height: 28px; letter-spacing: 0; }
  .title { grid-column: 5; }
  .launch { grid-column: 6; box-sizing: border-box; width: 152px; height: 23px; display: flex; align-items: center; gap: 4px; padding-left: 2px; border: 1px solid #b4b4b4; border-radius: 2px; background: #fff; color: #888; letter-spacing: -.2px; }
  .winbar { display: grid; grid-template-columns: 1px 29px 13px 1px 30px 1px 44px 44px 44px; align-items: center; justify-items: center; }

  nav { display: grid; grid-template-columns: 832px 922px 65px 84px 17px; box-sizing: border-box; border-bottom: 1px solid #a6a6a6; background: #d4d4d4; }
  .tabs { display: grid; grid-template-columns: 55px 3px 51px 43px 72px 56px 46px 66px 58px 49px 53px 85px 75px 45px 1px 74px; text-align: center; line-height: 29px; }
  .file { background: #b04a4b; color: #fff; border-radius: 2px 2px 0 0; }
  .home { height: 30px; box-sizing: border-box; background: linear-gradient(#7ba3b8, #7ba3b8) 50% 27px / 39px 2px no-repeat #f7f7f7; border: solid #b5b5b5; border-width: 1px 1px 0; border-radius: 3px 3px 0 0; color: #17365f; line-height: 28px; }
  .format { background: #d3ceaf; border: solid #d8c272; border-width: 0 1px; box-sizing: border-box; }
  .findbtn { grid-column: 3; box-sizing: border-box; width: 64px; height: 28px; margin-top: 1px; display: flex; align-items: center; gap: 3px; padding-left: 1px; background: #e5d09d; border: 1px solid #c3b78f; border-radius: 2px; }
  .searchbtn { display: flex; align-items: center; gap: 3px; padding-left: 1px; }
  .collapse { margin: 8px 0 0 3px; }

  .ribbon { display: flex; box-sizing: border-box; border-bottom: 1px solid #444; background: #f4f4f4; }
  .group { box-sizing: border-box; border-right: 1px solid #c4c4c4; padding-top: 2px; display: grid; grid-template-rows: 84px 16px; }
  .group h6 { margin: 0; font: inherit; font-size: 11.500px; line-height: 15px; text-align: center; color: #808080; letter-spacing: .1px; }
  .body { display: grid; }
  .tools { width: 268px; } .view { width: 177px; } .objects { width: 217px; } .comments { width: 269px; } .links { width: 209px; } .protect { width: 66px; }
  .tools h6 { padding-right: 4px; }
  .body .vr { background: #c4c4c4; }
  .comments .body > .vr { height: 84px; }
  .tools .body { grid-template-columns: 54px 50px 66px 97px; }
  .objects .body { grid-template-columns: 54px 54px 54px 50px; }
  .comments .body { grid-template-columns: 4px 110px 96px 1px 56px; }
  .comments .rows:first-child { grid-column: 2; }
  .links .body { grid-template-columns: 55px 153px; }
  .bigbtn { display: flex; flex-direction: column; align-items: center; padding-top: 3px; text-align: center; box-sizing: border-box; height: 84px; }
  .bigbtn > svg { margin: 0 -4px 4px; }
  .bigbtn .chev { display: inline-block; vertical-align: 0; }
  .on { margin: 0 1px; padding-top: 2px; background: #e5d09d; border: 1px solid #c3b78f; border-radius: 2px; }
  .rows { display: grid; grid-template-rows: repeat(3, 28px); }
  .rows > div { display: flex; align-items: center; gap: 3px; }
  .rows span { padding-bottom: 1.500px; }
  .rows .chev { margin-left: 1px; }
  .corner { align-self: flex-end; margin-bottom: 7px; }
  .view .body { grid-template-rows: repeat(3, 28px); padding-left: 4px; align-items: center; }
  .zoomrow { display: grid; grid-template-columns: 28px 115px 24px; align-items: center; }
  .combo { box-sizing: border-box; display: flex; align-items: center; justify-content: space-between; width: 112px; height: 23px; padding: 0 3px 0 3px; border: 1px solid #b4b4b4; border-radius: 2px; background: #fff; color: #111; letter-spacing: -.3px; }
  .r2 { display: grid; grid-template-columns: 27px 29px 27px 28px 3px 29px 24px; }
  .r3 { display: grid; grid-template-columns: 28px 28px 27px 29px 27px 4px 24px; }

  .doctabs { display: grid; grid-template-columns: 165px 2px 27px 1695px 31px; background: linear-gradient(#fafafa, #fafafa) 0 32px / 100% 2px no-repeat, repeating-linear-gradient(45deg, #0000 0 1px, #ffffff0c 1px 2px), repeating-linear-gradient(-45deg, #0000 0 1px, #ffffff0c 1px 2px), #858585; }
  .doctab { display: flex; justify-content: space-between; height: 34px; box-sizing: border-box; padding: 9px 5px 0; border-radius: 0 3px 0 0; background: linear-gradient(#a3a3a3, #a3a3a3) 5px 29px / 155px 2px no-repeat #fbfbfb; letter-spacing: -.2px; }
  .doctab svg { margin-top: -4px; }
  .newtab, .closeall { display: grid; place-items: center; background: #c8c8c8; border-radius: 2px; }
  .newtab { grid-column: 3; height: 27px; margin-top: 3px; }
  .closeall { grid-column: 5; height: 29px; margin-top: 1px; width: 30px; }

  .main { display: grid; grid-template-columns: 31px 1889px; }
  aside { display: flex; flex-direction: column; border-bottom: 1px solid #ddd; box-sizing: border-box; }
  .sidehead { height: 11px; background: #e8e8e8; display: flex; align-items: flex-end; justify-content: flex-end; padding-right: 1px; }
  .sidedots { height: 10px; margin: 2px 3px 0; background: radial-gradient(circle, #aaa 40%, #0000 45%) 0 0 / 2.500px 2.500px; }
  .sideicon { height: 28px; display: grid; place-items: center; padding-right: 1px; }
  aside hr { width: 28px; height: 1px; margin: 1px 1px 1px; border: 0; background: #c4c4c4; }
  .right { display: grid; grid-template-rows: 789px 15px 31px; }
  .viewer { display: grid; grid-template-columns: 1874px 15px; }
  .canvas { position: relative; box-sizing: border-box; border: 1px solid #6e6e6e; background: #fff; overflow: hidden; }
  .canvas::after { content: ''; position: absolute; inset: 0; box-shadow: inset 0 0 2px 1px #aaa; pointer-events: none; }
  .cad text { font: 171.500px 'Liberation Sans', sans-serif; font-kerning: none; letter-spacing: 0; fill: #000; }
  .vscroll { background: #f0f0f0; }
  .findpanel { position: absolute; left: 1562px; top: 1px; z-index: 1; width: 309px; height: 32px; box-sizing: border-box; display: grid; grid-template-columns: 25px 192px 22px 22px 23px 21px; align-items: center; justify-items: center; background: #f5f5f5; border-radius: 4px; box-shadow: 0 1px 4px 1px #888; }
  .findpanel > .chev { margin-left: 4px; }
  .findbox { box-sizing: border-box; width: 192px; height: 24px; display: grid; grid-template-columns: 136px 20px 19px 9px; align-items: center; padding-left: 3px; border: 1px solid #aaa; border-radius: 2px; background: #fff; }
  .findbox b { font-weight: 400; } .findbox span { color: #666; }
  .hscroll { display: grid; grid-template-columns: 5px 945px 87px 822px 5px; padding-left: 5px; width: 1873px; box-sizing: border-box; align-items: center; background: #efefef; }
  .hscroll i { grid-column: 3; height: 5px; border-radius: 3px; background: #7d7d7d; }
  .hscroll svg:last-child { grid-column: 5; }
  footer { display: grid; grid-template-columns: 798px 642px 449px; }
  .st { display: grid; align-items: center; height: 31px; justify-items: start; }
  .st > .vr { background: #c4c4c4; }
  .left { grid-template-columns: 14px 27px 55px 12px 4px 17px 77px 5px 18px 40px; }
  .left > span { letter-spacing: -.2px; }
  .center { grid-template-columns: 14px 28px 27px 99px 28px 27px 4px 28px 24px; justify-content: start; }
  .end { grid-template-columns: 13px 84px 4px 28px 104px 28px 13px 26px 30px 28px 28px 13px 27px 12px 11px; }
  .two { line-height: 13px; }
  .grip { height: 27px; width: 11px; display: flex; flex-direction: column; justify-content: space-between; }
  .grip i { height: 15px; width: 10px; margin-left: 2px; background: radial-gradient(circle, #aaa 40%, #0000 45%) 0 0 / 2.500px 2.500px; }
  .grip svg { margin-left: 2px; }
  .pagebox { box-sizing: border-box; width: 96px; height: 23px; border: 1px solid #c4c4c4; border-radius: 2px; background: #fafafa; display: flex; align-items: center; justify-content: flex-end; gap: 1px; padding-right: 3px; color: #555; }
  .pagebox sup { vertical-align: 0; font-size: inherit; margin-top: -4px; }
  .end .combo { width: 82px; }
  .pon { width: 28px; height: 28px; display: grid; place-items: center; background: #e5d09d; border-radius: 2px; }
  .tail { height: 31px; width: 11px; background: #e8e8e8; }
  .tail svg { margin: 2px 0 0 1px; }
</style>
